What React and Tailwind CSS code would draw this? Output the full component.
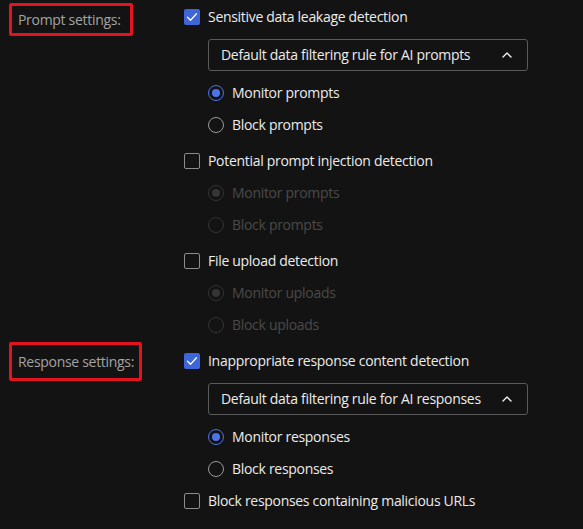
import React from "react";

const font = { fontFamily: '"Open Sans", "Noto Sans", sans-serif' };

function CheckBox({ checked }) {
  return checked ? (
    <span className="w-4 h-4 shrink-0 rounded-[2px] bg-[#3f66d9] flex items-center justify-center">
      <svg width="12" height="12" viewBox="0 0 12 12" fill="none">
        <path d="M1.5 6.3 L4.5 9.2 L10.5 2.8" stroke="#ffffff" strokeWidth="1.3" strokeLinecap="round" strokeLinejoin="round" />
      </svg>
    </span>
  ) : (
    <span className="w-4 h-4 shrink-0 rounded-[2px] border border-[#8c8c8c]" />
  );
}

function Radio({ checked, disabled }) {
  if (disabled) {
    return (
      <span className="w-4 h-4 shrink-0 rounded-full border border-[#343434] flex items-center justify-center">
        {checked && <span className="w-2 h-2 rounded-full bg-[#353535]" />}
      </span>
    );
  }
  return checked ? (
    <span className="w-4 h-4 shrink-0 rounded-full border-[1.5px] border-[#4a73e8] flex items-center justify-center">
      <span className="w-2 h-2 rounded-full bg-[#4a73e8]" />
    </span>
  ) : (
    <span className="w-4 h-4 shrink-0 rounded-full border border-[#9a9a9a]" />
  );
}

function CheckRow({ checked, label, className = "" }) {
  return (
    <div className={"h-8 flex items-center gap-2 " + className}>
      <CheckBox checked={checked} />
      <span className="text-[14px] tracking-[-0.3px] text-[#ececec] leading-none whitespace-nowrap">{label}</span>
    </div>
  );
}

function RadioRow({ checked, disabled, label }) {
  return (
    <div className="h-8 flex items-center gap-2 ml-6">
      <Radio checked={checked} disabled={disabled} />
      <span className={"text-[14px] tracking-[-0.3px] leading-none whitespace-nowrap " + (disabled ? "text-[#4a4a4a]" : "text-[#ececec]")}>{label}</span>
    </div>
  );
}

function Dropdown({ label, className = "" }) {
  return (
    <div className={"ml-6 w-[320px] h-8 rounded-[3px] border border-[#5a5a5a] flex items-center justify-between pl-[12px] pr-[15px] " + className}>
      <span className="text-[14px] tracking-[-0.3px] text-[#ececec] leading-none whitespace-nowrap">{label}</span>
      <svg width="10" height="6" viewBox="0 0 10 6" fill="none">
        <path d="M1 5 L5 1 L9 5" stroke="#f0f0f0" strokeWidth="1.4" strokeLinecap="round" strokeLinejoin="round" />
      </svg>
    </div>
  );
}

export default function App() {
  return (
    <div className="w-[583px] h-[529px] bg-[#131313] overflow-hidden" style={font}>
      <div className="flex pt-px">
        <div className="w-[184px] shrink-0 pl-[9px]">
          <div className="mt-[2px] w-[124px] h-[33px] border-[3px] border-[#e3141f] rounded-[2px] flex items-center pl-[6px]">
            <span className="text-[14px] tracking-[-0.3px] text-[#a3a3a3] leading-none whitespace-nowrap">Prompt settings:</span>
          </div>
        </div>
        <div className="flex flex-col">
          <CheckRow checked label="Sensitive data leakage detection" />
          <Dropdown label="Default data filtering rule for AI prompts" className="mt-[6px]" />
          <div className="mt-[6px]">
            <RadioRow checked label="Monitor prompts" />
            <RadioRow label="Block prompts" />
          </div>
          <CheckRow label="Potential prompt injection detection" className="mt-1" />
          <RadioRow checked disabled label="Monitor prompts" />
          <RadioRow disabled label="Block prompts" />
          <CheckRow label="File upload detection" className="mt-1" />
          <RadioRow checked disabled label="Monitor uploads" />
          <RadioRow disabled label="Block uploads" />
        </div>
      </div>
      <div className="flex mt-1">
        <div className="w-[184px] shrink-0 pl-[9px]">
          <div className="-mt-[3px] w-[133px] h-[39px] border-[3px] border-[#e3141f] rounded-[2px] flex items-center pl-[6px]">
            <span className="text-[14px] tracking-[-0.3px] text-[#a3a3a3] leading-none whitespace-nowrap">Response settings:</span>
          </div>
        </div>
        <div className="flex flex-col">
          <CheckRow checked label="Inappropriate response content detection" />
          <Dropdown label="Default data filtering rule for AI responses" className="mt-[6px]" />
          <div className="mt-[6px]">
            <RadioRow checked label="Monitor responses" />
            <RadioRow label="Block responses" />
          </div>
          <CheckRow label="Block responses containing malicious URLs" />
        </div>
      </div>
    </div>
  );
}
